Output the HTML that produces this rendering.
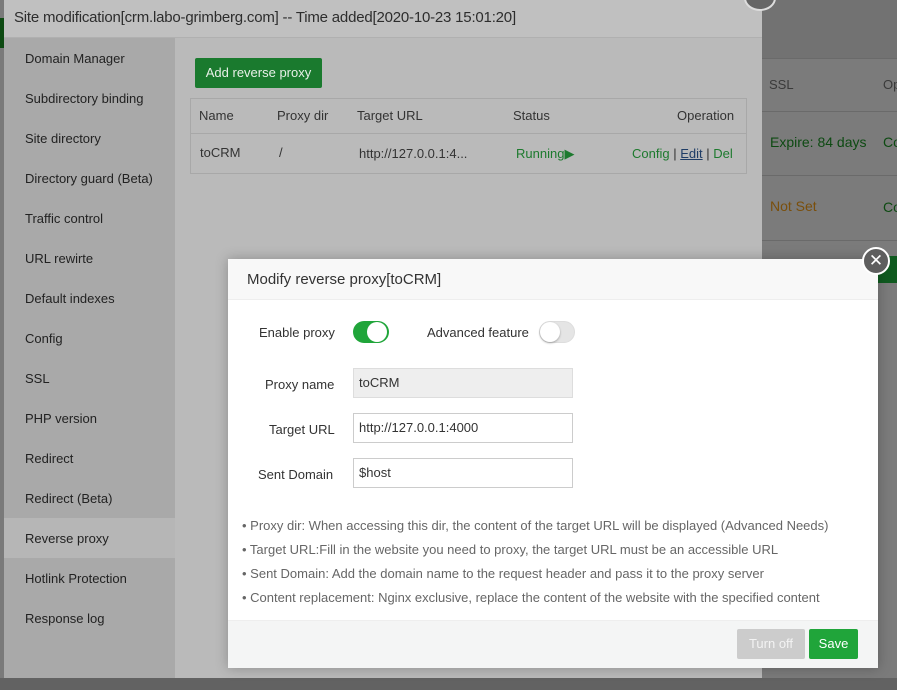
<!DOCTYPE html>
<html><head><style>
*{box-sizing:border-box;margin:0;padding:0}
body{width:897px;height:690px;overflow:hidden;background:#6e6e6e;font-family:"Liberation Sans",sans-serif;font-size:13px;position:relative;color:#333}
.abs{position:absolute}
</style></head><body>
<div class="abs" style="left:762px;top:0;width:135px;height:690px;background:#7b7b7b"></div>
<div class="abs" style="left:762px;top:0;width:135px;height:58px;background:#727272"></div>
<div class="abs" style="left:762px;top:58px;width:135px;height:1px;background:#6a6a6a"></div>
<div class="abs" style="left:762px;top:111px;width:135px;height:1px;background:#6a6a6a"></div>
<div class="abs" style="left:762px;top:175px;width:135px;height:1px;background:#6a6a6a"></div>
<div class="abs" style="left:762px;top:240px;width:135px;height:1px;background:#6a6a6a"></div>
<div class="abs" style="left:769px;top:77px;color:#3a3a3a;font-size:13px">SSL</div>
<div class="abs" style="left:883px;top:77px;color:#3a3a3a">Op</div>
<div class="abs" style="left:770px;top:134px;color:#0d4a12;font-size:14px">Expire: 84 days</div>
<div class="abs" style="left:883px;top:134px;color:#0d4a12;font-size:14px">Co</div>
<div class="abs" style="left:770px;top:198px;color:#7a4f0c;font-size:14px">Not Set</div>
<div class="abs" style="left:883px;top:199px;color:#0d4a12;font-size:14px">Co</div>
<div class="abs" style="left:878px;top:256px;width:19px;height:27px;background:#0f5a1f"></div>
<div class="abs" style="left:0;top:0;width:4px;height:690px;background:#7a7a7a"></div>
<div class="abs" style="left:0;top:18px;width:4px;height:30px;background:#0d4a12"></div>
<div class="abs" style="left:4px;top:0;width:758px;height:678px;background:#bababa"></div>
<div class="abs" style="left:4px;top:0;width:758px;height:38px;background:#c0c0c0;border-bottom:1px solid #b0b0b0"></div>
<div class="abs" style="left:14px;top:9px;font-size:15px;color:#2d2d2d;letter-spacing:-0.2px">Site modification[crm.labo-grimberg.com] -- Time added[2020-10-23 15:01:20]</div>
<div class="abs" style="left:744px;top:-15px;width:32px;height:26px;border-radius:50%;background:#666;border:2px solid #ddd"></div>
<div class="abs" style="left:4px;top:38px;width:171px;height:640px;background:#a9a9a9"></div>
<div class="abs" style="left:4px;top:518px;width:171px;height:40px;background:#b6b6b6"></div>
<div class="abs" style="left:25px;top:39px;color:#222;line-height:40px;font-size:13px">
Domain Manager<br>Subdirectory binding<br>Site directory<br>Directory guard (Beta)<br>Traffic control<br>URL rewirte<br>Default indexes<br>Config<br>SSL<br>PHP version<br>Redirect<br>Redirect (Beta)<br>Reverse proxy<br>Hotlink Protection<br>Response log</div>
<div class="abs" style="left:195px;top:58px;width:127px;height:30px;background:#1a7a2e;border-radius:2px;color:#e8f0e8;font-size:13px;line-height:30px;text-align:center">Add reverse proxy</div>
<div class="abs" style="left:190px;top:98px;width:557px;height:76px;border:1px solid #a8a8a8"></div>
<div class="abs" style="left:191px;top:133px;width:555px;height:1px;background:#a8a8a8"></div>
<div class="abs" style="left:199px;top:108px;color:#333">Name</div>
<div class="abs" style="left:277px;top:108px;color:#333">Proxy dir</div>
<div class="abs" style="left:357px;top:108px;color:#333">Target URL</div>
<div class="abs" style="left:513px;top:108px;color:#333">Status</div>
<div class="abs" style="left:677px;top:108px;color:#333">Operation</div>
<div class="abs" style="left:200px;top:145px;color:#333">toCRM</div>
<div class="abs" style="left:279px;top:145px;color:#333">/</div>
<div class="abs" style="left:359px;top:146px;color:#333">http://127.0.0.1:4...</div>
<div class="abs" style="left:516px;top:146px;color:#1d7a2e">Running<span style="font-size:13px">&#9654;</span></div>
<div class="abs" style="left:632px;top:146px;color:#1d7a2e">Config <span style="color:#333">|</span> <span style="color:#1f3d66;text-decoration:underline">Edit</span> <span style="color:#333">|</span> Del</div>
<div class="abs" style="left:0;top:678px;width:897px;height:12px;background:#626262"></div>
<div class="abs" style="left:228px;top:259px;width:650px;height:409px;background:#fff;box-shadow:0 0 12px rgba(0,0,0,.25)"></div>
<div class="abs" style="left:228px;top:259px;width:650px;height:41px;background:#f8f8f8;border-bottom:1px solid #eee"></div>
<div class="abs" style="left:247px;top:271px;font-size:15px;color:#333">Modify reverse proxy[toCRM]</div>
<div class="abs" style="left:862px;top:247px;width:28px;height:28px;border-radius:50%;background:#5e5e5e;border:2px solid #fff;color:#fff;font-size:17px;line-height:23px;text-align:center">✕</div>
<div class="abs" style="left:259px;top:325px;color:#333">Enable proxy</div>
<div class="abs" style="left:353px;top:321px;width:36px;height:22px;border-radius:11px;background:#20a53a"></div>
<div class="abs" style="left:367px;top:322px;width:20px;height:20px;border-radius:50%;background:#fff"></div>
<div class="abs" style="left:427px;top:325px;color:#333">Advanced feature</div>
<div class="abs" style="left:539px;top:321px;width:36px;height:22px;border-radius:11px;background:#e5e5e5;border:1px solid #ddd"></div>
<div class="abs" style="left:540px;top:322px;width:20px;height:20px;border-radius:50%;background:#fff;box-shadow:0 1px 2px rgba(0,0,0,.3)"></div>
<div class="abs" style="left:265px;top:377px;color:#333">Proxy name</div>
<div class="abs" style="left:353px;top:368px;width:220px;height:30px;background:#eee;border:1px solid #ddd;padding-left:5px;line-height:28px">toCRM</div>
<div class="abs" style="left:269px;top:422px;color:#333">Target URL</div>
<div class="abs" style="left:353px;top:413px;width:220px;height:30px;border:1px solid #ccc;padding-left:5px;line-height:28px">http://127.0.0.1:4000</div>
<div class="abs" style="left:258px;top:467px;color:#333">Sent Domain</div>
<div class="abs" style="left:353px;top:458px;width:220px;height:30px;border:1px solid #ccc;padding-left:5px;line-height:28px">$host</div>
<div class="abs" style="left:242px;top:514px;color:#666;font-size:13px;line-height:24px">
<div>• Proxy dir: When accessing this dir, the content of the target URL will be displayed (Advanced Needs)</div>
<div>• Target URL:Fill in the website you need to proxy, the target URL must be an accessible URL</div>
<div>• Sent Domain: Add the domain name to the request header and pass it to the proxy server</div>
<div>• Content replacement: Nginx exclusive, replace the content of the website with the specified content</div></div>
<div class="abs" style="left:228px;top:620px;width:650px;height:48px;background:#f4f5f5;border-top:1px solid #eee"></div>
<div class="abs" style="left:737px;top:629px;width:68px;height:30px;background:#ccc;border-radius:2px;color:#f3f3f3;line-height:30px;text-align:center">Turn off</div>
<div class="abs" style="left:809px;top:629px;width:49px;height:30px;background:#20a53a;border-radius:2px;color:#fff;line-height:30px;text-align:center">Save</div>
</body></html>
